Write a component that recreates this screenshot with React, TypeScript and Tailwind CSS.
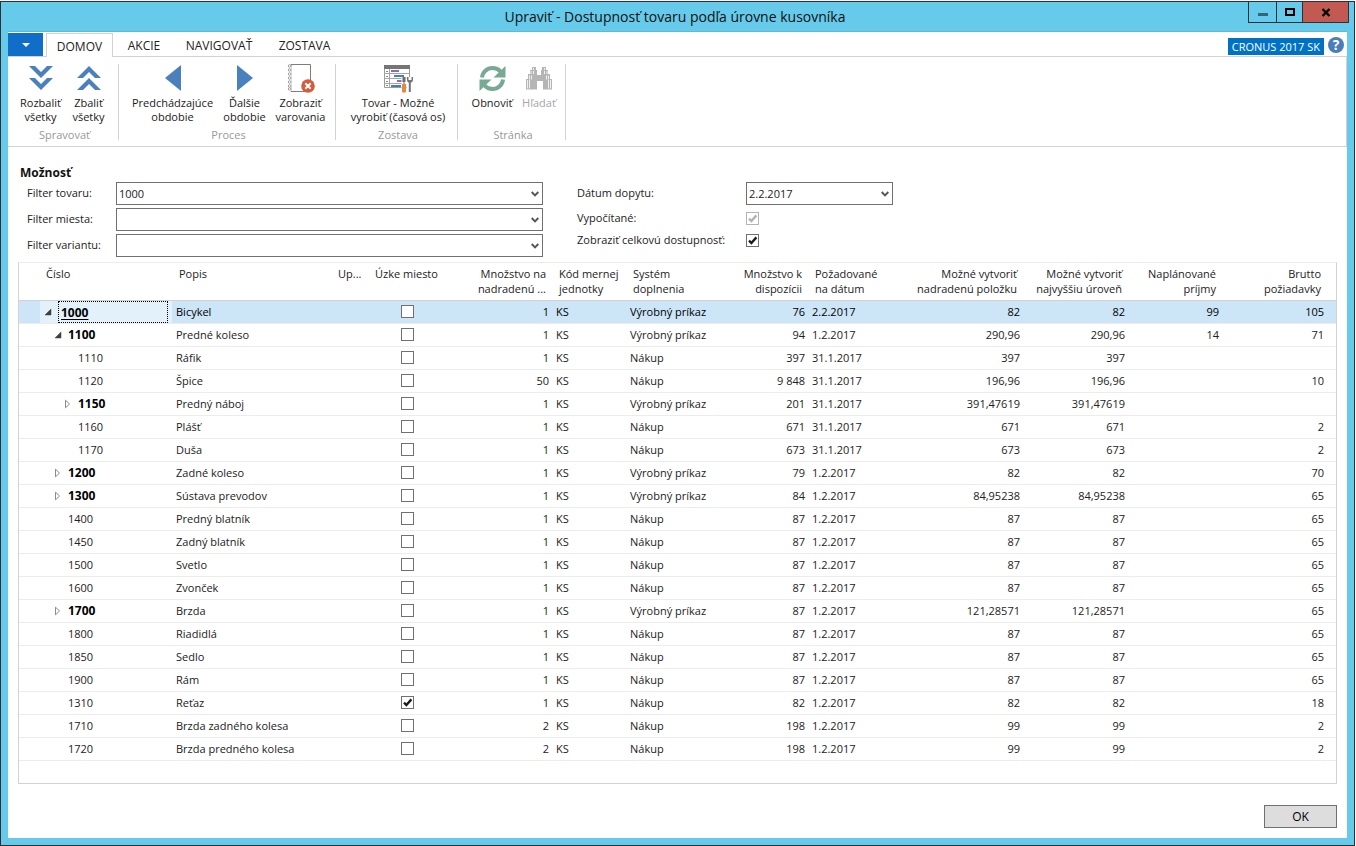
import { useState, ReactNode } from 'react';

interface Item {
    no: string;
    level: number;
    state?: 'open' | 'closed';
    name: string;
    bottleneck?: boolean;
    perParent: string;
    system: string;
    available: string;
    date: string;
    parent: string;
    top: string;
    receipts?: string;
    gross?: string;
}

const VP = 'Výrobný príkaz';
const NK = 'Nákup';

const items: Item[] = [
    { no: '1000', level: 0, state: 'open', name: 'Bicykel', perParent: '1', system: VP, available: '76', date: '2.2.2017', parent: '82', top: '82', receipts: '99', gross: '105' },
    { no: '1100', level: 1, state: 'open', name: 'Predné koleso', perParent: '1', system: VP, available: '94', date: '1.2.2017', parent: '290,96', top: '290,96', receipts: '14', gross: '71' },
    { no: '1110', level: 2, name: 'Ráfik', perParent: '1', system: NK, available: '397', date: '31.1.2017', parent: '397', top: '397' },
    { no: '1120', level: 2, name: 'Špice', perParent: '50', system: NK, available: '9 848', date: '31.1.2017', parent: '196,96', top: '196,96', gross: '10' },
    { no: '1150', level: 2, state: 'closed', name: 'Predný náboj', perParent: '1', system: VP, available: '201', date: '31.1.2017', parent: '391,47619', top: '391,47619' },
    { no: '1160', level: 2, name: 'Plášť', perParent: '1', system: NK, available: '671', date: '31.1.2017', parent: '671', top: '671', gross: '2' },
    { no: '1170', level: 2, name: 'Duša', perParent: '1', system: NK, available: '673', date: '31.1.2017', parent: '673', top: '673', gross: '2' },
    { no: '1200', level: 1, state: 'closed', name: 'Zadné koleso', perParent: '1', system: VP, available: '79', date: '1.2.2017', parent: '82', top: '82', gross: '70' },
    { no: '1300', level: 1, state: 'closed', name: 'Sústava prevodov', perParent: '1', system: VP, available: '84', date: '1.2.2017', parent: '84,95238', top: '84,95238', gross: '65' },
    { no: '1400', level: 1, name: 'Predný blatník', perParent: '1', system: NK, available: '87', date: '1.2.2017', parent: '87', top: '87', gross: '65' },
    { no: '1450', level: 1, name: 'Zadný blatník', perParent: '1', system: NK, available: '87', date: '1.2.2017', parent: '87', top: '87', gross: '65' },
    { no: '1500', level: 1, name: 'Svetlo', perParent: '1', system: NK, available: '87', date: '1.2.2017', parent: '87', top: '87', gross: '65' },
    { no: '1600', level: 1, name: 'Zvonček', perParent: '1', system: NK, available: '87', date: '1.2.2017', parent: '87', top: '87', gross: '65' },
    { no: '1700', level: 1, state: 'closed', name: 'Brzda', perParent: '1', system: VP, available: '87', date: '1.2.2017', parent: '121,28571', top: '121,28571', gross: '65' },
    { no: '1800', level: 1, name: 'Riadidlá', perParent: '1', system: NK, available: '87', date: '1.2.2017', parent: '87', top: '87', gross: '65' },
    { no: '1850', level: 1, name: 'Sedlo', perParent: '1', system: NK, available: '87', date: '1.2.2017', parent: '87', top: '87', gross: '65' },
    { no: '1900', level: 1, name: 'Rám', perParent: '1', system: NK, available: '87', date: '1.2.2017', parent: '87', top: '87', gross: '65' },
    { no: '1310', level: 1, name: 'Reťaz', bottleneck: true, perParent: '1', system: NK, available: '82', date: '1.2.2017', parent: '82', top: '82', gross: '18' },
    { no: '1710', level: 1, name: 'Brzda zadného kolesa', perParent: '2', system: NK, available: '198', date: '1.2.2017', parent: '99', top: '99', gross: '2' },
    { no: '1720', level: 1, name: 'Brzda predného kolesa', perParent: '2', system: NK, available: '198', date: '1.2.2017', parent: '99', top: '99', gross: '2' },
];

const indent = ['pl-[21px]', 'pl-[31px]', 'pl-[41px]'];

const columns = [
    { label: ['Číslo'], width: 'w-[153px]', className: 'pl-[27px] text-left' },
    { label: ['Popis'], width: 'w-[162px]', className: 'px-[7px] text-left' },
    { label: ['Up...'], width: 'w-[37px]', className: 'pl-1 text-left' },
    { label: ['Úzke miesto'], width: 'w-[74px]', className: 'pl-1 text-left' },
    { label: ['Množstvo na', 'nadradenú ...'], width: 'w-[108px]', className: 'px-[7px] text-right' },
    { label: ['Kód mernej', 'jednotky'], width: 'w-[74px]', className: 'pl-[6px] text-left' },
    { label: ['Systém', 'doplnenia'], width: 'w-[90px]', className: 'px-[6px] text-left' },
    { label: ['Množstvo k', 'dispozícii'], width: 'w-[92px]', className: 'px-[7px] text-right' },
    { label: ['Požadované', 'na dátum'], width: 'w-[90px]', className: 'px-[6px] text-left' },
    { label: ['Možné vytvoriť', 'nadradenú položku'], width: 'w-[125px]', className: 'px-[7px] text-right' },
    { label: ['Možné vytvoriť', 'najvyššiu úroveň'], width: 'w-[105px]', className: 'px-[7px] text-right' },
    { label: ['Naplánované', 'príjmy'], width: 'w-[94px]', className: 'px-[7px] text-right' },
    { label: ['Brutto', 'požiadavky'], width: 'w-auto', className: 'pr-[15px] text-right' },
];

const CheckBox = ({ id, label, defaultChecked, disabled }: { id?: string; label?: string; defaultChecked?: boolean; disabled?: boolean }) => (
    <span className="relative block size-[13px]">
        <input
            id={id}
            type="checkbox"
            aria-label={label}
            defaultChecked={defaultChecked}
            disabled={disabled}
            className="peer block size-[13px] appearance-none border border-[#707070] bg-white disabled:border-[#b4b4b4]"
        />
        <svg viewBox="0 0 13 13" className="pointer-events-none absolute inset-0 hidden size-[13px] text-[#1c1c1c] peer-checked:block peer-disabled:text-[#b0b4b6]">
            <path d="M3 6.6 L5.4 9 L10.4 3.4" fill="none" stroke="currentColor" strokeWidth="2.4" />
        </svg>
    </span>
);

const Combo = ({ id, value, className }: { id: string; value: string; className: string }) => (
    <span className={`relative block h-[23px] ${className}`}>
        <select id={id} defaultValue={value} className="block h-[23px] w-full appearance-none border border-[#707070] bg-white pl-[2px] pr-4 text-[11px] leading-[19px] text-[#222]">
            <option value={value}>{value}</option>
        </select>
        <svg viewBox="0 0 8 6" className="pointer-events-none absolute right-1 top-[9px] h-[6px] w-2">
            <path d="M0.7 1 L4 4.3 L7.3 1" fill="none" stroke="#555" strokeWidth="1.9" />
        </svg>
    </span>
);

const RibbonButton = ({ icon, lines, className, disabled }: { icon: ReactNode; lines: string[]; className: string; disabled?: boolean }) => (
    <button type="button" disabled={disabled} className={`flex flex-col items-center whitespace-nowrap leading-[14px] text-[#1a1a1a] disabled:text-[#a6a6a6] ${className}`}>
        <span className="mb-1 flex h-7 items-center justify-center">{icon}</span>
        {lines.map((line) => (
            <span key={line}>{line}</span>
        ))}
    </button>
);

const RibbonGroup = ({ name, className, children }: { name: string; className: string; children: ReactNode }) => (
    <div className={`flex h-[76px] flex-col justify-between border-r border-[#d2d2d2] pl-[3px] ${className}`}>
        <div className="flex justify-center">{children}</div>
        <div className="text-center leading-[10px] text-[#999]">{name}</div>
    </div>
);

const ChevronsIcon = ({ up }: { up?: boolean }) => (
    <svg viewBox="0 0 24 26" className={`h-[26px] w-6 ${up ? 'rotate-180' : ''}`} fill="#4a80bb">
        <path d="M0 1h6l6 6 6-6h6L12 13z" />
        <path d="M0 13h6l6 6 6-6h6L12 25z" />
    </svg>
);

const NotebookIcon = () => (
    <svg viewBox="0 0 28 30" className="h-[30px] w-7">
        <path d="M4 1.5H23.5V28.5H4z" fill="#fff" stroke="#7d7d7d" />
        <path d="M3.5 3V28" stroke="#fff" strokeWidth="2" />
        <g fill="#fff" stroke="#8a8a8a" strokeWidth="0.8">
            {[3, 7, 11, 15, 19, 23, 26].map((y) => (
                <circle key={y} cx="2.6" cy={y} r="1.3" />
            ))}
        </g>
        <circle cx="21" cy="23" r="6.800" fill="#d65a3c" />
        <path d="M18.3 20.3l5.4 5.4m0-5.4l-5.4 5.4" stroke="#fff" strokeWidth="2" />
    </svg>
);

const TimelineIcon = () => (
    <svg viewBox="0 0 29 29" className="size-[29px]">
        <path d="M.5 1.5H25.5V23.5H.5z" fill="#fff" stroke="#9a9a9a" />
        <path d="M0 1h26v4H0z" fill="#757575" />
        <path d="M0 9.5h26M0 14.5h26M0 19.5h20M5.5 5v19" stroke="#a5a5a5" />
        <path d="M2 7.5h2M2 12.5h2M2 17.5h2M2 21.5h2" stroke="#888" />
        <path d="M7 7h8M13 17h7" stroke="#9467ba" strokeWidth="2" />
        <path d="M10 12h10M7 22h10" stroke="#4381bd" strokeWidth="2" />
        <path d="M17.5 13h5v16h-5zM23 13h6v15h-6z" fill="#fff" />
        <path d="M18.5 13h3v5h-1v3h-1v-3h-1z" fill="#6c6c6c" />
        <path d="M18 20h4v8q-2 1.5-4 0z" fill="#e58a3d" />
        <path d="M23 13v3q0 2 1.8 2.8V28h2V18.8Q29 18 29 16v-3h-1.5v3h-3v-3z" fill="#757575" />
    </svg>
);

const RefreshIcon = () => (
    <svg viewBox="0 0 27 27" className="size-[27px]">
        <path d="M3 12.5C3.5 7 8 3 13.5 3c3.5 0 6 1.2 8 3.5" fill="none" stroke="#77a994" strokeWidth="4" />
        <path d="M26.5 1v11.5H14.5z" fill="#77a994" />
        <path d="M24 14.5C23.5 20 19 24 13.5 24c-3.5 0-6-1.2-8-3.5" fill="none" stroke="#77a994" strokeWidth="4" />
        <path d="M.5 26V14.5h12z" fill="#77a994" />
    </svg>
);

const BinocularsIcon = () => (
    <svg viewBox="0 0 26 25" className="h-[25px] w-[26px]" fill="#b5b5b5">
        <path d="M6 1h4v3h1v5h4V4h1V1h4v3h2v4h2v5h2v10.5h-9V15h-6v8.5H0V13h2V8h2V4h2z" />
        <path d="M7.5 2v2M18.5 2v2M5 5v3M7.5 5v3M18.5 5v3M21 5v3M3.5 9.5v4M5.5 9.5v4M20.5 9.5v4M22.5 9.5v4M1.5 14v8.5M3.5 14v8.5M22.5 14v8.5M24.5 14v8.5" stroke="#fff" strokeWidth="0.8" />
    </svg>
);

const Expander = ({ state }: { state?: 'open' | 'closed' }) => (
    <svg viewBox="0 0 8 10" className="mr-[6px] h-[10px] w-2 shrink-0">
        {state === 'open' && <path d="M7 2v6H1z" fill="#404040" stroke="#404040" strokeWidth="0.5" />}
        {state === 'closed' && <path d="M1.5 1.2v7.6L5.5 5z" fill="#fff" stroke="#8a8a8a" />}
    </svg>
);

const App = () => {
    const [selected, setSelected] = useState('1000');

    return (
        <div className="min-h-screen bg-[#f4f4f4] pr-px pt-px font-['Open_Sans','Noto_Sans',sans-serif] text-[11px] text-[#222]">
            <div className="flex min-h-[calc(100vh-1px)] flex-col border border-[#2f2f36] bg-[#66caea]">
                {/* Title bar */}
                <header className="flex h-[29px] shrink-0">
                    <div className="flex-1"></div>
                    <h1 className="pt-1 text-sm leading-[22px] text-[#101010]">Upraviť - Dostupnosť tovaru podľa úrovne kusovníka</h1>
                    <div className="flex flex-1 justify-end pr-[5px]">
                        <div className="flex h-[21px] border-x border-b border-[#2f2f36]">
                            <button type="button" aria-label="Minimalizovať" className="flex w-[27px] items-center justify-center">
                                <span className="mt-1 h-[3px] w-[10px] bg-[#336577]"></span>
                            </button>
                            <button type="button" aria-label="Maximalizovať" className="flex w-[27px] items-center justify-center border-x border-[#2f2f36]">
                                <span className="h-2 w-[10px] border-2 border-black"></span>
                            </button>
                            <button type="button" aria-label="Zavrieť" className="flex w-[45px] items-center justify-center bg-[#c35a51]">
                                <svg viewBox="0 0 10 9" className="h-[9px] w-[10px]">
                                    <path d="M1.5 1l7 7M8.5 1l-7 7" stroke="#000" strokeWidth="2.4" />
                                </svg>
                            </button>
                        </div>
                    </div>
                </header>

                <div className="mx-[7px] mb-[7px] flex flex-1 flex-col border-t border-[#62b7d3] bg-white">
                    {/* Tabs */}
                    <nav className="flex h-6 pt-px text-xs">
                        <button type="button" aria-label="Menu" className="flex h-[23px] w-[35px] items-center justify-center bg-[#106ec8]">
                            <svg viewBox="0 0 8 4" className="h-1 w-2">
                                <path d="M0 0h8L4 4z" fill="#fff" />
                            </svg>
                        </button>
                        <button type="button" className="relative z-10 ml-[3px] -mb-px w-[67px] border border-b-0 border-[#d2d2d2] bg-white pt-[3px]">DOMOV</button>
                        <button type="button" className="w-[62px] pt-[3px]">AKCIE</button>
                        <button type="button" className="w-[88px] pt-[3px]">NAVIGOVAŤ</button>
                        <button type="button" className="w-[83px] pt-[3px]">ZOSTAVA</button>
                        <div className="ml-auto flex items-start pt-1 pr-[3px]">
                            <span className="mt-px h-[17px] bg-[#0072c6] px-1 text-[11px] leading-[17px] text-white">CRONUS 2017 SK</span>
                            <button type="button" aria-label="Pomocník" className="ml-1 size-4 rounded-full bg-[#4a7ebb] text-sm leading-4 font-bold text-white">?</button>
                        </div>
                    </nav>

                    {/* Ribbon */}
                    <div className="flex h-[91px] border-y border-r border-[#d2d2d2] pt-[7px]">
                        <RibbonGroup name="Spravovať" className="w-[111px]">
                            <RibbonButton icon={<ChevronsIcon />} lines={['Rozbaliť', 'všetky']} className="w-12" />
                            <RibbonButton icon={<ChevronsIcon up />} lines={['Zbaliť', 'všetky']} className="w-12" />
                        </RibbonGroup>
                        <RibbonGroup name="Proces" className="w-[217px]">
                            <RibbonButton
                                icon={<svg viewBox="0 0 16 26" className="h-[26px] w-4"><path d="M16 0v26L0 13z" fill="#4a80bb" /></svg>}
                                lines={['Predchádzajúce', 'obdobie']}
                                className="w-24"
                            />
                            <RibbonButton
                                icon={<svg viewBox="0 0 16 26" className="h-[26px] w-4"><path d="M0 0v26l16-13z" fill="#4a80bb" /></svg>}
                                lines={['Ďalšie', 'obdobie']}
                                className="w-12"
                            />
                            <RibbonButton icon={<NotebookIcon />} lines={['Zobraziť', 'varovania']} className="w-16" />
                        </RibbonGroup>
                        <RibbonGroup name="Zostava" className="w-[122px]">
                            <RibbonButton icon={<TimelineIcon />} lines={['Tovar - Možné', 'vyrobiť (časová os)']} className="w-full" />
                        </RibbonGroup>
                        <RibbonGroup name="Stránka" className="w-[108px]">
                            <RibbonButton icon={<RefreshIcon />} lines={['Obnoviť']} className="w-[52px]" />
                            <RibbonButton icon={<BinocularsIcon />} lines={['Hľadať']} className="w-[42px]" disabled />
                        </RibbonGroup>
                    </div>

                    {/* Filters */}
                    <section className="px-[10px] pt-4">
                        <h2 className="pl-[2px] text-xs leading-[19px] font-bold text-[#111]">Možnosť</h2>
                        <div className="flex items-start pl-[9px]">
                            <div className="grid grid-cols-[89px_427px] items-center gap-y-[3px]">
                                <label htmlFor="item">Filter tovaru:</label>
                                <Combo id="item" value="1000" className="w-full" />
                                <label htmlFor="location">Filter miesta:</label>
                                <Combo id="location" value="" className="w-full" />
                                <label htmlFor="variant">Filter variantu:</label>
                                <Combo id="variant" value="" className="w-full" />
                            </div>
                            <div className="ml-[34px] grid grid-cols-[169px_147px] grid-rows-[23px_26px_19px] items-center">
                                <label htmlFor="demand">Dátum dopytu:</label>
                                <Combo id="demand" value="2.2.2017" className="w-full" />
                                <label htmlFor="calculated">Vypočítané:</label>
                                <CheckBox id="calculated" defaultChecked disabled />
                                <label htmlFor="total">Zobraziť celkovú dostupnosť:</label>
                                <CheckBox id="total" defaultChecked />
                            </div>
                        </div>
                    </section>

                    {/* Availability lines */}
                    <div className="mx-[10px] mt-[5px] flex-1 border border-[#d2d2d2] border-t-[#ececec]">
                        <table className="w-full table-fixed border-collapse">
                            <thead>
                                <tr className="h-[37px] border-b border-[#d2d2d2]">
                                    {columns.map((col) => (
                                        <th key={col.label.join(' ')} className={`pt-[3px] align-top font-normal whitespace-nowrap leading-[15px] ${col.width} ${col.className}`}>
                                            {col.label.map((line) => (
                                                <span key={line} className="block">{line}</span>
                                            ))}
                                        </th>
                                    ))}
                                </tr>
                            </thead>
                            <tbody>
                                {items.map((item) => {
                                    const active = item.no === selected;
                                    return (
                                        <tr
                                            key={item.no}
                                            onClick={() => setSelected(item.no)}
                                            className={`h-[23px] border-b border-[#ececec] whitespace-nowrap leading-5 ${active ? 'bg-[#cce5f7] text-black' : ''}`}
                                        >
                                            <td className={indent[item.level]}>
                                                <div className={`flex h-[22px] items-center pl-1 ${active ? 'bg-[#e3f1fa]' : ''}`}>
                                                    <Expander state={item.state} />
                                                    {active ? (
                                                        <span className="mr-1 h-[22px] flex-1 border border-dotted border-black pl-[2px] text-xs leading-[21px] font-bold underline underline-offset-2">{item.no}</span>
                                                    ) : (
                                                        <span className={item.state ? 'text-xs font-bold text-black' : ''}>{item.no}</span>
                                                    )}
                                                </div>
                                            </td>
                                            <td className="px-1">{item.name}</td>
                                            <td></td>
                                            <td className="pl-[30px]"><CheckBox label={`Úzke miesto ${item.no}`} defaultChecked={item.bottleneck} /></td>
                                            <td className="px-1 text-right">{item.perParent}</td>
                                            <td className="pl-[3px]">KS</td>
                                            <td className="px-[3px]">{item.system}</td>
                                            <td className="px-1 text-right">{item.available}</td>
                                            <td className="px-[3px]">{item.date}</td>
                                            <td className="px-1 text-right">{item.parent}</td>
                                            <td className="px-1 text-right">{item.top}</td>
                                            <td className="px-1 text-right">{item.receipts}</td>
                                            <td className="pr-3 text-right">{item.gross}</td>
                                        </tr>
                                    );
                                })}
                            </tbody>
                        </table>
                    </div>

                    <footer className="flex justify-end px-[10px] pt-[21px] pb-[10px]">
                        <button type="button" className="h-[23px] w-[73px] border border-[#707070] bg-[#ddd] text-xs text-black">OK</button>
                    </footer>
                </div>
            </div>
        </div>
    );
};

export default App;
